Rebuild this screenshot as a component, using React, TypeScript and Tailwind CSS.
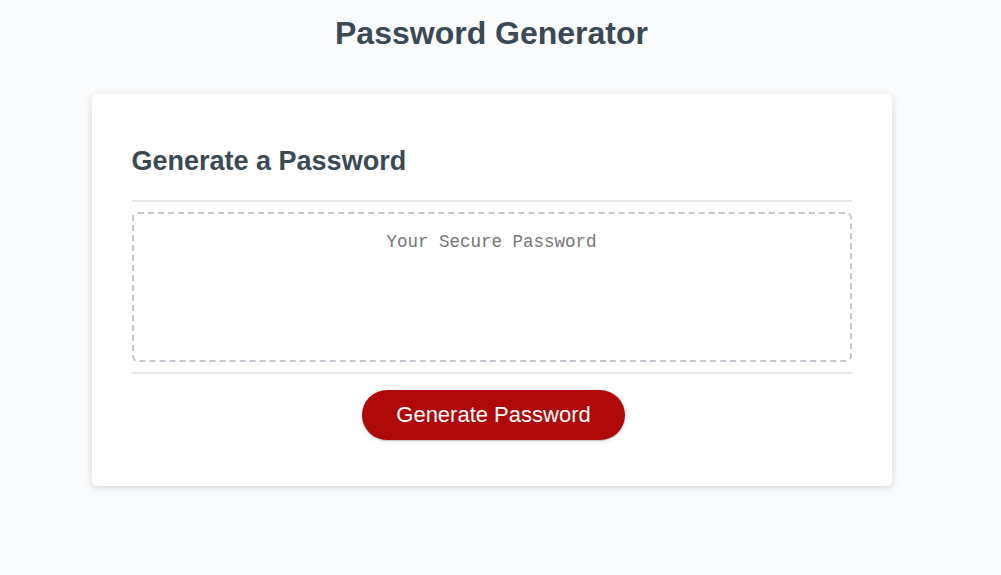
import React from "react";

export default function App() {
  return (
    <div className="min-h-screen w-full bg-[#f9fbfd] font-['Liberation_Sans',Arial,sans-serif] text-[#3b4954]">
      <div className="w-[983px] pt-[15px]">
        <header className="text-center">
          <h1 className="m-0 text-[32px] font-bold leading-[37px]">Password Generator</h1>
        </header>
        <div className="mx-auto mt-[42px] w-[800px] rounded-[5px] bg-white px-[40px] pt-[30px] pb-[30px] text-[18px] shadow-[0_2px_8px_rgba(0,0,0,0.15)]">
          <div>
            <h2 className="mt-[22px] mb-[23px] text-[27px] font-bold leading-[31px]">Generate a Password</h2>
            <div className="h-[2px] w-full bg-[#e7e9eb]" />
          </div>
          <div>
            <textarea
              readOnly
              placeholder="Your Secure Password"
              className="my-[10px] block h-[150px] w-full resize-none overflow-hidden rounded-[6px] border-2 border-dashed border-[#c0c7cf] px-[15px] pt-[17px] pb-[84px] text-center font-['Liberation_Mono','DejaVu_Sans_Mono',monospace] text-[17.5px] leading-[22.5px] text-[#333] outline-none placeholder:text-[#757575]"
            />
          </div>
          <div className="text-center">
            <div className="h-[2px] w-full bg-[#e7e9eb]" />
            <button className="mt-[16px] mr-[16px] mb-[16px] ml-[20px] inline-block cursor-pointer rounded-[25px] border-none bg-[#af0808] px-[34px] py-[14px] align-top text-center text-[22px] leading-[22px] text-white shadow-[0_1px_6px_rgba(0,0,0,0.1),0_1px_1px_rgba(0,0,0,0.2)]">
              Generate Password
            </button>
          </div>
        </div>
      </div>
    </div>
  );
}
